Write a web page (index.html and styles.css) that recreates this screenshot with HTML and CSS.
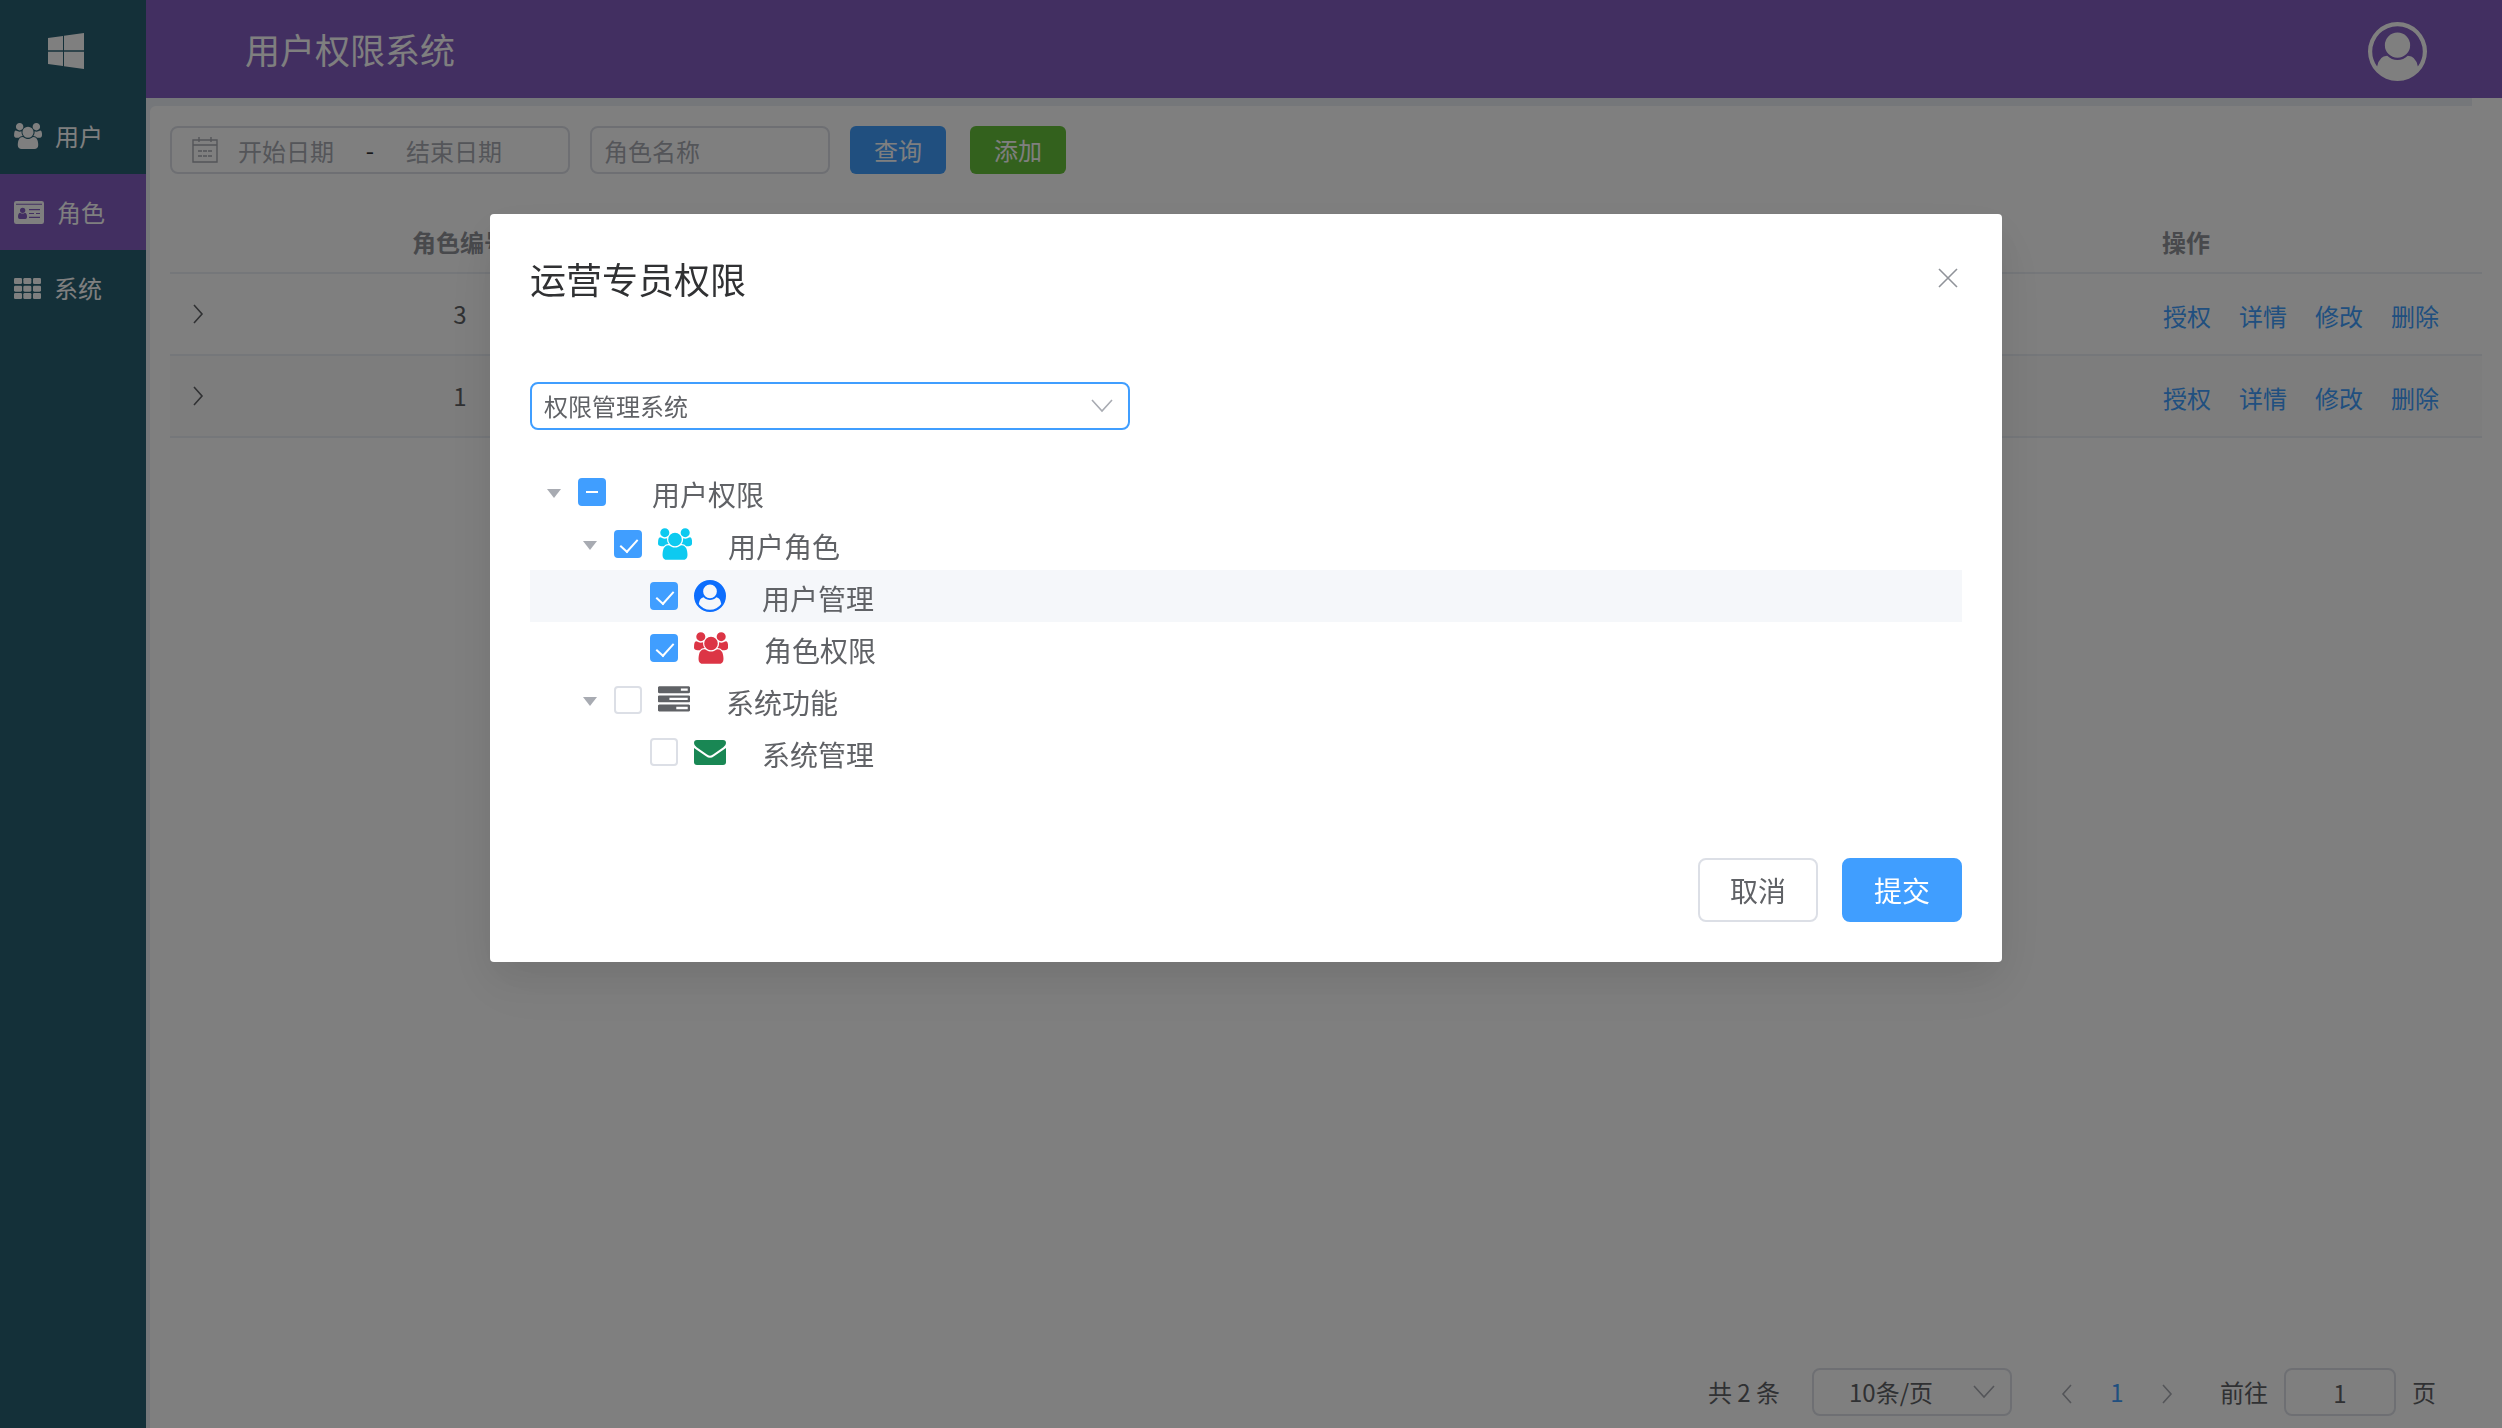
FILE: index.html
```html
<!DOCTYPE html>
<html lang="zh-CN">
<head>
<meta charset="utf-8">
<meta name="viewport" content="width=device-width, initial-scale=1">
<title>用户权限系统</title>
<link rel="stylesheet" href="styles.css">
</head>
<body>
<svg class="sprite" aria-hidden="true">
  <symbol id="i-users" viewBox="0 0 1920 1792"><path d="M593 896q-162 5-265 128h-134q-82 0-138-40.5t-56-118.5q0-353 124-353 6 0 43.5 21t97.5 42.5 119 21.5q67 0 133-23-5 37-5 66 0 159 90 256zm1071 637q0 120-73 189.5t-194 69.5h-874q-121 0-194-69.5t-73-189.5q0-53 3.5-103.5t14-109 26.5-108.5 43-97.5 62-81 85.5-53.5 111.5-20q10 0 43 21.5t73 48 107 48 135 21.5 135-21.5 107-48 73-48 43-21.5q61 0 111.5 20t85.5 53.5 62 81 43 97.5 26.5 108.5 14 109 3.5 103.5zm-1024-1277q0 106-75 181t-181 75-181-75-75-181 75-181 181-75 181 75 75 181zm704 384q0 159-112.5 271.5t-271.5 112.5-271.5-112.5-112.5-271.5 112.5-271.5 271.5-112.5 271.5 112.5 112.5 271.5zm576 225q0 78-56 118.5t-138 40.5h-134q-103-123-265-128 90-97 90-256 0-29-5-66 66 23 133 23 59 0 119-21.5t97.5-42.5 43.5-21q124 0 124 353zm-128-609q0 106-75 181t-181 75-181-75-75-181 75-181 181-75 181 75 75 181z"/></symbol>
  <symbol id="i-down" viewBox="0 0 22 14"><path d="M1 1l10 11L21 1" fill="none" stroke="currentColor" stroke-width="1.6"/></symbol>
  <symbol id="i-right" viewBox="0 0 12 20"><path d="M2 1l8 9-8 9" fill="none" stroke="currentColor" stroke-width="1.6"/></symbol>
  <symbol id="i-left" viewBox="0 0 12 20"><path d="M10 1l-8 9 8 9" fill="none" stroke="currentColor" stroke-width="1.6"/></symbol>
</svg>

<div class="app">
  <nav class="sidebar">
    <a class="logo" href="#" aria-label="首页">
      <svg width="36" height="36" viewBox="0 0 108 108"><path d="M0 15l45-6v43H0zM48 8l60-8v52H48zM0 56h45v43L0 93zM48 56h60v52l-60-8z"/></svg>
    </a>
    <a class="menu-item" href="#"><svg width="28" height="26"><use href="#i-users"/></svg>用户</a>
    <a class="menu-item is-active" href="#"><svg width="30" height="23" viewBox="0 0 90 69"><path fill-rule="evenodd" d="M7 0h76q7 0 7 7v55q0 7-7 7H7q-7 0-7-7V7q0-7 7-7zM6 8v3h78V8zM26 20a8 8 0 1 0 0 16a8 8 0 1 0 0-16zM18 35q-6 1-6 13q0 6 5 6h17q5 0 5-6q0-12-6-13q-7 5-15 0zM45 24v4h33v-4zM45 36v3h15v-3zM66 36v3h12v-3zM45 47v4h33v-4z"/></svg>角色</a>
    <a class="menu-item" href="#"><svg width="27" height="21" viewBox="0 0 81 63"><g><rect width="24" height="18" rx="4"/><rect x="28" width="24" height="18" rx="4"/><rect x="57" width="24" height="18" rx="4"/><rect y="23" width="24" height="18" rx="4"/><rect x="28" y="23" width="24" height="18" rx="4"/><rect x="57" y="23" width="24" height="18" rx="4"/><rect y="45" width="24" height="18" rx="4"/><rect x="28" y="45" width="24" height="18" rx="4"/><rect x="57" y="45" width="24" height="18" rx="4"/></g></svg>系统</a>
  </nav>

  <div class="main">
    <header class="topbar">
      <h1>用户权限系统</h1>
      <button class="avatar" type="button" aria-label="账户">
        <svg width="59" height="59" viewBox="0 0 1792 1792"><path fill-rule="evenodd" d="M896 0q182 0 348 71t286 191 191 286 71 348q0 181-70.5 347t-190.5 286-286 191.5-349 71.5-349-71-285.5-191.5-190.5-286-71-347.5 71-348 191-286 286-191 348-71zm619 1351q149-205 149-455 0-156-61-298t-164-245-245-164-298-61-298 61-245 164-164 245-61 298q0 250 149 455 66-327 306-327 131 128 313 128t313-128q240 0 306 327zm-235-647q0-159-112.5-271.5t-271.5-112.5-271.5 112.5-112.5 271.5 112.5 271.5 271.5 112.5 271.5-112.5 112.5-271.5z"/></svg>
      </button>
    </header>

    <div class="content">
      <main class="panel">
        <form class="toolbar">
          <div class="date-range">
            <svg width="26" height="26" viewBox="0 0 26 26"><g fill="none" stroke="currentColor" stroke-width="1.4"><path d="M1 3h24v22H1zM1 8h24M7 0v5M19 0v5"/><path d="M6 14h4M11 14h4M16 14h4M6 19h4M11 19h4M16 19h4"/></g></svg>
            <input type="text" placeholder="开始日期" aria-label="开始日期">
            <span>-</span>
            <input type="text" placeholder="结束日期" aria-label="结束日期">
          </div>
          <input class="field name-field" type="text" placeholder="角色名称" aria-label="角色名称">
          <button class="btn btn-primary btn-query" type="button">查询</button>
          <button class="btn btn-success" type="button">添加</button>
        </form>

        <table class="roles">
          <colgroup><col class="col-expand"><col class="col-id"><col><col class="col-actions"></colgroup>
          <thead>
            <tr><th></th><th class="center">角色编号</th><th></th><th>操作</th></tr>
          </thead>
          <tbody>
            <tr>
              <td><button class="expand" type="button" aria-label="展开"><svg width="12" height="20"><use href="#i-right"/></svg></button></td>
              <td class="center">3</td><td></td>
              <td><div class="actions"><a href="#">授权</a><a href="#">详情</a><a href="#">修改</a><a href="#">删除</a></div></td>
            </tr>
            <tr>
              <td><button class="expand" type="button" aria-label="展开"><svg width="12" height="20"><use href="#i-right"/></svg></button></td>
              <td class="center">1</td><td></td>
              <td><div class="actions"><a href="#">授权</a><a href="#">详情</a><a href="#">修改</a><a href="#">删除</a></div></td>
            </tr>
          </tbody>
        </table>

        <div class="pagination">
          <span>共 2 条</span>
          <div class="select page-size">
            <select class="field" aria-label="每页条数"><option>10条/页</option></select>
            <svg width="22" height="14"><use href="#i-down"/></svg>
          </div>
          <div class="pager">
            <button type="button" aria-label="上一页"><svg width="12" height="20"><use href="#i-left"/></svg></button>
            <button class="is-current" type="button">1</button>
            <button type="button" aria-label="下一页"><svg width="12" height="20"><use href="#i-right"/></svg></button>
          </div>
          <label class="jump">前往<input class="field" type="text" value="1">页</label>
        </div>
      </main>
    </div>
  </div>
</div>

<div class="overlay">
  <section class="dialog" role="dialog" aria-modal="true" aria-labelledby="dialog-title">
    <header class="dialog-head">
      <h2 id="dialog-title">运营专员权限</h2>
      <button class="close" type="button" aria-label="关闭"><svg width="20" height="20" viewBox="0 0 20 20"><path d="M1 1l18 18M19 1L1 19" stroke="currentColor" stroke-width="1.6"/></svg></button>
    </header>

    <div class="select system-select">
      <select class="field" aria-label="系统"><option>权限管理系统</option></select>
      <svg width="22" height="14"><use href="#i-down"/></svg>
    </div>

    <div class="tree" role="tree">
      <div class="node level-1" role="treeitem">
        <span class="caret"></span>
        <input type="checkbox" id="n1" class="is-partial" aria-checked="mixed">
        <label for="n1">用户权限</label>
      </div>
      <div class="node level-2" role="treeitem">
        <span class="caret"></span>
        <input type="checkbox" id="n2" checked>
        <svg class="cyan" width="34" height="32"><use href="#i-users"/></svg>
        <label for="n2">用户角色</label>
      </div>
      <div class="node level-3 is-hover" role="treeitem">
        <input type="checkbox" id="n3" checked>
        <svg class="blue" width="32" height="32" viewBox="0 0 1792 1792"><path fill-rule="evenodd" d="M1523 1339q-22-155-87.5-257.5t-184.5-118.5q-67 74-159.5 115.5t-195.5 41.5-195.5-41.5-159.5-115.5q-119 16-184.5 118.5t-87.5 257.5q106 150 271 237.5t356 87.5 356-87.5 271-237.5zm-243-699q0-159-112.5-271.5t-271.5-112.5-271.5 112.5-112.5 271.5 112.5 271.5 271.5 112.5 271.5-112.5 112.5-271.5zm512 256q0 182-71 347.5t-190.5 286-285.5 191.5-349 71-348-71-286-191-191-286-71-348 71-348 191-286 286-191 348-71 348 71 286 191 191 286 71 348z"/></svg>
        <label for="n3">用户管理</label>
      </div>
      <div class="node level-3" role="treeitem">
        <input type="checkbox" id="n4" checked>
        <svg class="red" width="34" height="32"><use href="#i-users"/></svg>
        <label for="n4">角色权限</label>
      </div>
      <div class="node level-2" role="treeitem">
        <span class="caret"></span>
        <input type="checkbox" id="n5">
        <svg width="32" height="32" viewBox="0 0 1792 1792"><path fill-rule="evenodd" d="M1024 1408h640v-128h-640v128zm-384-512h1024v-128h-1024v128zm640-512h384v-128h-384v128zm512 832v256q0 26-19 45t-45 19h-1664q-26 0-45-19t-19-45v-256q0-26 19-45t45-19h1664q26 0 45 19t19 45zm0-512v256q0 26-19 45t-45 19h-1664q-26 0-45-19t-19-45v-256q0-26 19-45t45-19h1664q26 0 45 19t19 45zm0-512v256q0 26-19 45t-45 19h-1664q-26 0-45-19t-19-45v-256q0-26 19-45t45-19h1664q26 0 45 19t19 45z"/></svg>
        <label for="n5">系统功能</label>
      </div>
      <div class="node level-3" role="treeitem">
        <input type="checkbox" id="n6">
        <svg class="green" width="32" height="25" viewBox="0 0 96 75"><path d="M9 0h78q9 0 9 9q0 8-8 13L58 43q-10 8-20 0L8 22Q0 17 0 9Q0 0 9 0zM0 24l36 25q12 9 24 0l36-25v42q0 9-9 9H9q-9 0-9-9z"/></svg>
        <label for="n6">系统管理</label>
      </div>
    </div>

    <footer class="dialog-foot">
      <button class="btn btn-large" type="button">取消</button>
      <button class="btn btn-large btn-primary" type="button">提交</button>
    </footer>
  </section>
</div>
</body>
</html>
```
FILE: styles.css
```css
:root {
  --primary: #409eff;
  --success: #67c23a;
  --text: #606266;
  --title: #303133;
  --muted: #909399;
  --placeholder: #a8abb2;
  --border: #dcdfe6;
  --line: #ebeef5;
  --purple: #845ec2;
  --teal: #296073;
}

* { box-sizing: border-box; }

body,
button,
input,
select {
  font-family: "Noto Sans CJK SC", "Open Sans", sans-serif;
  font-size: 24px;
  line-height: 32px;
  color: var(--text);
}

body { margin: 0; background: #fff; }

h1, h2 { margin: 0; font-weight: 400; }

button { padding: 0; border: 0; background: none; cursor: pointer; }

a { text-decoration: none; }

svg { display: block; flex: none; fill: currentColor; }

.sprite { position: absolute; width: 0; height: 0; }

.app { display: flex; min-height: 100vh; }

/* Sidebar */
.sidebar { flex: none; width: 146px; background: var(--teal); color: #fff; }

.logo { display: flex; align-items: center; height: 98px; padding: 4px 0 0 48px; color: #fff; }

.menu-item {
  display: flex;
  align-items: center;
  gap: 13px;
  height: 76px;
  padding-left: 14px;
  color: #fff;
}

.menu-item.is-active { background: var(--purple); }

/* Main column */
.main { display: flex; flex: 1; flex-direction: column; min-width: 0; }

.topbar {
  display: flex;
  align-items: center;
  justify-content: space-between;
  height: 98px;
  padding: 0 75px 0 99px;
  background: var(--purple);
  color: #fff;
}

.topbar h1 { font-size: 35px; line-height: 48px; }

.avatar { padding-top: 4px; color: #fff; }

.content {
  display: flex;
  flex: 1;
  margin-right: 30px;
  padding: 8px 0 0 4px;
  background: var(--line);
}

.panel {
  display: flex;
  flex: 1;
  flex-direction: column;
  min-width: 0;
  margin-right: -30px;
  padding: 20px 20px 12px;
  border-radius: 6px 0 0 0;
  background: #fff;
}

/* Form controls */
.field {
  width: 100%;
  height: 48px;
  margin: 0;
  padding: 0 12px;
  border: 2px solid var(--border);
  border-radius: 8px;
  background: #fff;
  outline: none;
  appearance: none;
}

input::placeholder { color: var(--placeholder); opacity: 1; }

.toolbar { display: flex; align-items: center; }

.date-range {
  display: flex;
  align-items: center;
  width: 400px;
  height: 48px;
  padding: 0 20px;
  border: 2px solid var(--border);
  border-radius: 8px;
  color: var(--placeholder);
}

.date-range input {
  width: 136px;
  height: 44px;
  padding: 0;
  border: 0;
  background: none;
  text-align: center;
  outline: none;
}

.date-range span { width: 32px; color: var(--title); text-align: center; }

.name-field { width: 240px; margin-left: 20px; }

.btn {
  width: 96px;
  height: 48px;
  border-radius: 6px;
}

.btn-primary { background: var(--primary); color: #fff; }
.btn-success { background: var(--success); color: #fff; }
.btn-query { margin: 0 24px 0 20px; }

.btn-large {
  width: 120px;
  height: 64px;
  border: 2px solid var(--border);
  border-radius: 8px;
  font-size: 28px;
}

.btn-large.btn-primary { border-color: var(--primary); }

.select { position: relative; }

.select svg {
  position: absolute;
  top: 17px;
  right: 17px;
  color: var(--placeholder);
  pointer-events: none;
}

/* Table */
.roles {
  width: 100%;
  margin-top: 38px;
  border-collapse: separate;
  border-spacing: 0;
  table-layout: fixed;
}

.col-expand { width: 96px; }
.col-id { width: 388px; }
.col-actions { width: 340px; }

.roles th,
.roles td {
  height: 82px;
  padding: 0 20px;
  border-bottom: 2px solid var(--line);
  text-align: left;
}

.roles th { height: 62px; color: var(--muted); font-weight: 700; }
.roles .center { text-align: center; }
.roles tbody tr:nth-child(even) { background: #fafafa; }

.expand { display: flex; padding: 2px; }

.actions { display: flex; gap: 28px; padding: 3px 0 0 1px; }
.actions a { color: var(--primary); }

/* Pagination */
.pagination {
  display: flex;
  align-items: center;
  justify-content: flex-end;
  margin-top: auto;
  padding-right: 46px;
}

.page-size { width: 200px; margin: 0 30px 0 32px; }
.page-size .field { padding-left: 35px; }

.pager { display: flex; }

.pager button {
  display: flex;
  align-items: center;
  justify-content: center;
  width: 50px;
  height: 48px;
}

.pager .is-current { color: var(--primary); }
.pager svg { margin-top: 4px; color: var(--placeholder); }

.jump { display: flex; align-items: center; gap: 16px; margin-left: 28px; }
.jump .field { width: 112px; text-align: center; }

/* Dialog */
.overlay {
  position: fixed;
  inset: 0;
  overflow: auto;
  padding: 214px 500px 60px 490px;
  background: rgba(0, 0, 0, 0.5);
}

.dialog {
  min-width: 700px;
  padding: 40px;
  border-radius: 4px;
  background: #fff;
  box-shadow: 0 24px 64px 8px rgba(0, 0, 0, 0.04), 0 16px 40px rgba(0, 0, 0, 0.08);
}

.dialog-head {
  display: flex;
  align-items: center;
  justify-content: space-between;
  margin-bottom: 80px;
}

.dialog-head h2 { color: var(--title); font-size: 36px; line-height: 48px; }

.close { padding: 4px; color: var(--muted); }

.system-select { width: 600px; max-width: 100%; }
.system-select .field { border-color: var(--primary); }

.tree { margin: 36px 0 80px; }

.node { display: flex; align-items: center; height: 52px; }

.node.is-hover { background: #f5f7fa; }

.level-2 { padding-left: 36px; }
.level-3 { padding-left: 120px; }

.caret { display: flex; justify-content: center; flex: none; width: 48px; padding-top: 2px; }

.caret::before {
  content: "";
  border: 7px solid transparent;
  border-top: 9px solid var(--placeholder);
  border-bottom: 0;
}

.node input {
  position: relative;
  flex: none;
  width: 28px;
  height: 28px;
  margin: 0 16px 0 0;
  border: 2px solid var(--border);
  border-radius: 4px;
  background: #fff;
  appearance: none;
}

.node input:checked,
.node input.is-partial { border-color: var(--primary); background: var(--primary); }

.node input:checked::after {
  content: "";
  position: absolute;
  top: 3px;
  left: 8px;
  width: 8px;
  height: 15px;
  border: solid #fff;
  border-width: 0 2px 2px 0;
  transform: rotate(42deg);
}

.node input.is-partial::after {
  content: "";
  position: absolute;
  top: 11px;
  left: 6px;
  width: 12px;
  height: 2px;
  background: #fff;
}

.node svg { margin-right: 6px; }

.node label { margin-left: 30px; padding-top: 3px; font-size: 28px; line-height: 40px; }

.cyan { color: #0dcaf0; }
.blue { color: #0d6efd; }
.red { color: #dc3545; }
.green { color: #198754; }

.dialog-foot { display: flex; justify-content: flex-end; gap: 24px; }
```
